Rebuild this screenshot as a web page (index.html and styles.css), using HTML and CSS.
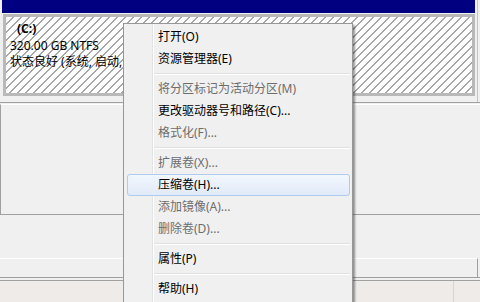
FILE: index.html
```html
<!DOCTYPE html>
<html lang="zh-CN">
<head>
  <meta charset="UTF-8">
  <title>磁盘管理</title>
  <link rel="stylesheet" href="styles.css">
</head>
<body>
  <div class="disk">
    <div class="header"></div>
    <div class="partition">
      <div class="vol">(C:)</div>
      <div>320.00 GB NTFS</div>
      <div>状态良好 (系统, 启动,</div>
    </div>
  </div>

  <div class="pane">
    <div class="pane-inner"></div>
  </div>
  <div class="legend-gap"></div>
  <div class="legend"></div>
  <div class="frame-bottom"></div>
  <div class="statusbar">
    <div class="status-cell"></div>
  </div>

  <!-- context menu -->
  <div class="menu">
    <div class="item">打开(O)</div>
    <div class="item">资源管理器(E)</div>
    <div class="sep"></div>
    <div class="item disabled">将分区标记为活动分区(M)</div>
    <div class="item">更改驱动器号和路径(C)...</div>
    <div class="item disabled">格式化(F)...</div>
    <div class="sep"></div>
    <div class="item disabled">扩展卷(X)...</div>
    <div class="item hover">压缩卷(H)...</div>
    <div class="item disabled">添加镜像(A)...</div>
    <div class="item disabled">删除卷(D)...</div>
    <div class="sep"></div>
    <div class="item">属性(P)</div>
    <div class="sep"></div>
    <div class="item">帮助(H)</div>
  </div>
</body>
</html>
```

FILE: styles.css
```css
/* Disk management view with context menu */
body {
  margin: 0;
  width: 480px;
  height: 302px;
  overflow: hidden;
  position: relative;
  background-color: #f0f0f0;
  font-family: "Noto Sans", "Noto Sans CJK SC", sans-serif;
  font-size: 12px;
  color: #000;
}

.disk {
  width: 477px;
  height: 102px;
  border-right: 1px solid #c4c4c4;
}

.header {
  margin-left: 2px;
  width: 473px;
  height: 13px;
  background-color: #000080;
}

.partition {
  margin: 1px 0 0 3px;
  width: 462px;
  height: 72px;
  border: 3px solid #b9b9b9;
  padding: 4px 0 0 4px;
  background-color: #fff;
  background-image: repeating-linear-gradient(135deg, transparent 0 4.6px, #a8a8a8 4.6px 5.66px);
  line-height: 16.5px;
  white-space: nowrap;
}

.vol {
  padding-left: 7px;
  font-weight: bold;
}

/* lower panes */
.pane {
  border-top: 1px solid #a0a0a0;
}

.pane-inner {
  margin-top: 1px;
  height: 109px;
  border-top: 1px solid #fff;
  border-left: 1px solid #a0a0a0;
  border-bottom: 1px solid #a0a0a0;
}

.legend-gap {
  height: 43px;
}

.legend {
  width: 477px;
  height: 18px;
  border-top: 1px solid #fff;
  border-right: 1px solid #a0a0a0;
}

.frame-bottom {
  height: 2px;
  border-top: 1px solid #a0a0a0;
  border-bottom: 1px solid #a0a0a0;
}

.statusbar {
  display: flex;
  height: 21px;
  background-color: #efebe9;
}

.status-cell {
  width: 453px;
  border-right: 1px solid #d9d5d3;
}

/* context menu */
.menu {
  position: absolute;
  left: 123px;
  top: 23px;
  width: 223px;
  padding: 2px 2px 4px 3px;
  border: 1px solid #979797;
  background-color: #f0f0f0;
  background-image: linear-gradient(to right, #e2e3e3, #e2e3e3), linear-gradient(to right, #fff, #fff);
  background-size: 1px 100%, 1px 100%;
  background-position: 28px 0, 29px 0;
  background-repeat: no-repeat;
  box-shadow: 2px 2px 2px rgba(0, 0, 0, 0.4);
}

.item {
  height: 22px;
  box-sizing: border-box;
  border: 1px solid transparent;
  border-radius: 3px;
  padding-left: 30px;
  line-height: 20px;
  white-space: nowrap;
}

.item.disabled {
  color: #6d6d6d;
}

.item.hover {
  border-color: #afcbee;
  background: linear-gradient(#f2f7fd, #e1eaf8);
}

.sep {
  height: 8px;
  margin-left: 27px;
  background-image: linear-gradient(#e0e0e0, #e0e0e0), linear-gradient(#fff, #fff);
  background-size: 100% 1px, 100% 1px;
  background-position: 0 3px, 0 4px;
  background-repeat: no-repeat;
}
```
